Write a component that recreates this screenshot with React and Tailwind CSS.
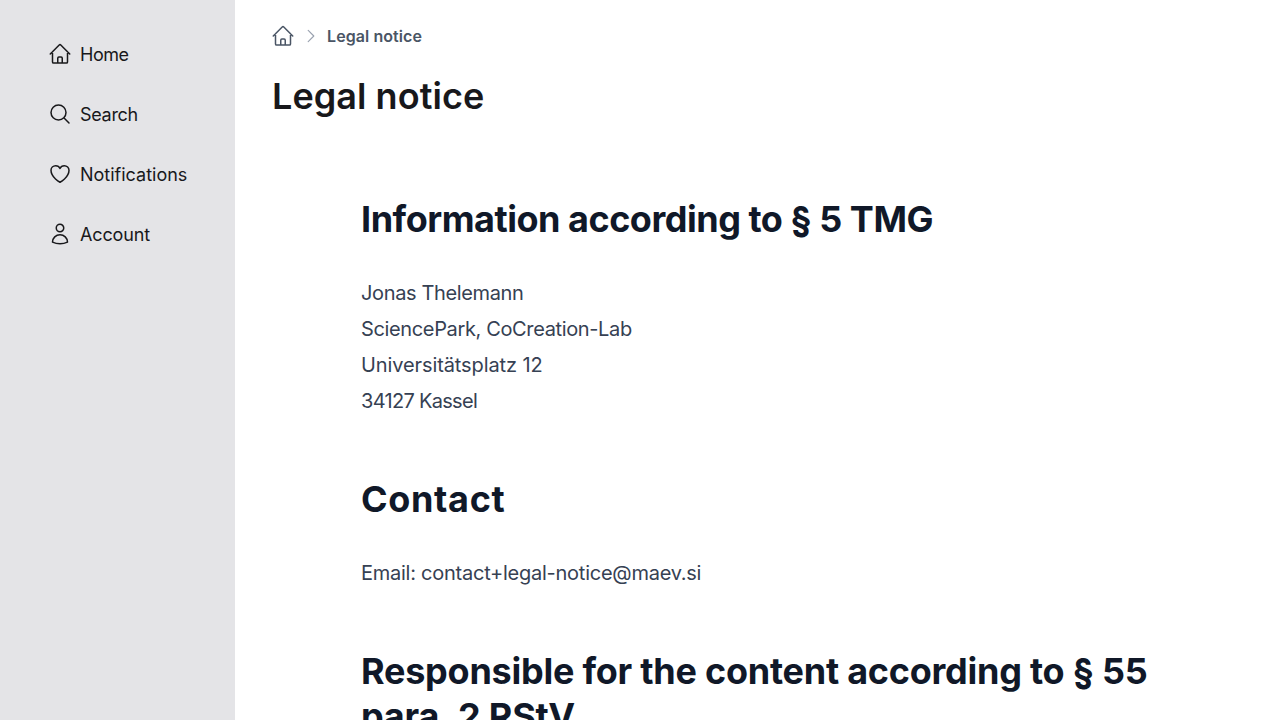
const HomeIcon = ({ className }) => (
  <svg xmlns="http://www.w3.org/2000/svg" fill="none" viewBox="0 0 24 24" strokeWidth={1.5} stroke="currentColor" className={className}>
    <path strokeLinecap="round" strokeLinejoin="round" d="m2.25 12 8.954-8.955c.44-.439 1.152-.439 1.591 0L21.75 12M4.5 9.75v10.125c0 .621.504 1.125 1.125 1.125H9.75v-4.875c0-.621.504-1.125 1.125-1.125h2.25c.621 0 1.125.504 1.125 1.125V21h4.125c.621 0 1.125-.504 1.125-1.125V9.75M8.25 21h8.25" />
  </svg>
);

const SearchIcon = ({ className }) => (
  <svg xmlns="http://www.w3.org/2000/svg" fill="none" viewBox="0 0 24 24" strokeWidth={1.5} stroke="currentColor" className={className}>
    <path strokeLinecap="round" strokeLinejoin="round" d="m21 21-5.197-5.197m0 0A7.5 7.5 0 1 0 5.196 5.196a7.5 7.5 0 0 0 10.607 10.607Z" />
  </svg>
);

const HeartIcon = ({ className }) => (
  <svg xmlns="http://www.w3.org/2000/svg" fill="none" viewBox="0 0 24 24" strokeWidth={1.5} stroke="currentColor" className={className}>
    <path strokeLinecap="round" strokeLinejoin="round" d="M21 8.25c0-2.485-2.099-4.5-4.688-4.5-1.935 0-3.597 1.126-4.312 2.733-.715-1.607-2.377-2.733-4.313-2.733C5.1 3.75 3 5.765 3 8.25c0 7.22 9 12 9 12s9-4.78 9-12Z" />
  </svg>
);

const UserIcon = ({ className }) => (
  <svg xmlns="http://www.w3.org/2000/svg" fill="none" viewBox="0 0 24 24" strokeWidth={1.5} stroke="currentColor" className={className}>
    <path strokeLinecap="round" strokeLinejoin="round" d="M15.75 6a3.75 3.75 0 1 1-7.5 0 3.75 3.75 0 0 1 7.5 0ZM4.501 20.118a7.5 7.5 0 0 1 14.998 0A17.933 17.933 0 0 1 12 21.75c-2.676 0-5.216-.584-7.499-1.632Z" />
  </svg>
);

const navItems = [
  { label: 'Home', Icon: HomeIcon, tracking: 'tracking-[-0.5px]' },
  { label: 'Search', Icon: SearchIcon, tracking: 'tracking-[-0.3px]' },
  { label: 'Notifications', Icon: HeartIcon, tracking: 'tracking-[0px]' },
  { label: 'Account', Icon: UserIcon, tracking: 'tracking-[-0.15px]' },
];

const App = () => {
  return (
    <div className="h-screen overflow-hidden flex bg-white font-['Inter',sans-serif]">
      {/* Sidebar */}
      <aside className="w-[235px] shrink-0 bg-zinc-200 pt-6 pl-12">
        <nav className="flex flex-col">
          {navItems.map(({ label, Icon, tracking }) => (
            <a key={label} className="h-[60px] flex items-center gap-2 text-lg text-zinc-900">
              <Icon className="w-6 h-6" />
              <span className={`pt-0.5 ${tracking}`}>{label}</span>
            </a>
          ))}
        </nav>
      </aside>

      {/* Main */}
      <main className="grow min-w-0 pl-9 pr-12 pt-6">
        <div className="h-6 flex items-center text-gray-600">
          <HomeIcon className="w-6 h-6" />
          <svg xmlns="http://www.w3.org/2000/svg" fill="none" viewBox="0 0 24 24" strokeWidth={1.5} stroke="currentColor" className="w-[18px] h-[18px] ml-[7px] text-gray-400">
            <path strokeLinecap="round" strokeLinejoin="round" d="m8.25 4.5 7.5 7.5-7.5 7.5" />
          </svg>
          <span className="ml-[7px] text-base font-semibold tracking-[0.08px]">Legal notice</span>
        </div>
        <h1 className="mt-[26px] pl-px text-4xl leading-[44px] font-semibold text-zinc-900 tracking-[0.05px]">Legal notice</h1>

        <div className="mt-[79px] pl-[90px] text-gray-700">
          <h2 className="text-4xl leading-[45px] font-bold text-gray-900 tracking-[-0.48px]">Information according to § 5 TMG</h2>
          <div className="mt-[33px] text-xl leading-9">
            <p className="tracking-[-0.36px]">Jonas Thelemann</p>
            <p className="tracking-[-0.36px]">SciencePark, CoCreation-Lab</p>
            <p className="tracking-[-0.1px]">Universitätsplatz 12</p>
            <p className="tracking-[-0.7px]">34127 Kassel</p>
          </div>

          <h2 className="mt-[58px] text-4xl leading-[45px] font-bold text-gray-900 tracking-[0.65px]">Contact</h2>
          <p className="mt-[33px] text-xl leading-9 tracking-[-0.25px]">Email: contact+legal-notice@maev.si</p>

          <h2 className="mt-[58px] text-4xl leading-[45px] font-bold text-gray-900 tracking-[-0.24px]">Responsible for the content according to § 55 para. 2 RStV</h2>
        </div>
      </main>
    </div>
  );
};

export default App;
